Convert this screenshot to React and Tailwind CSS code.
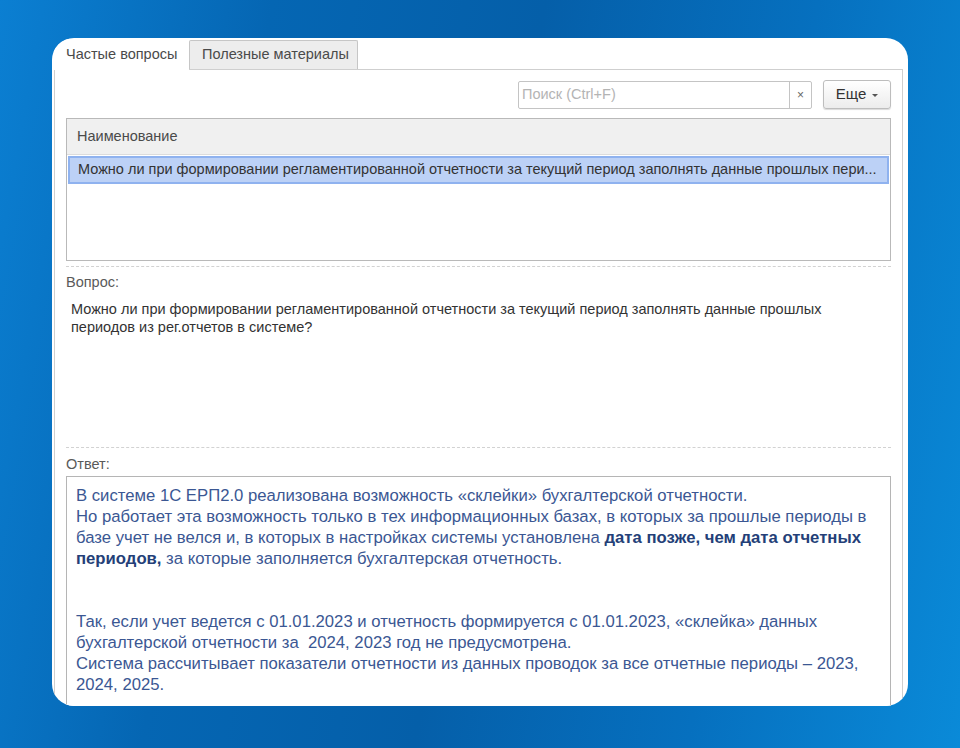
import React from "react";

const font = { fontFamily: '"Liberation Sans", Arial, sans-serif' };

const Tabs = () => (
  <div className="flex h-[31px] items-end border-b border-[#cfcfcf]">
    <div className="-mb-px flex h-[31px] w-[135px] items-center bg-white pl-[12px] text-[14.5px] text-[#4a4a4a]">
      Частые вопросы
    </div>
    <div className="flex h-[29px] w-[169px] items-center rounded-t-[2px] border border-b-0 border-[#c6c6c6] bg-[#ededed] pl-[12px] text-[14.5px] text-[#4a4a4a]">
      Полезные материалы
    </div>
  </div>
);

const Toolbar = () => (
  <div className="flex h-[29px] items-center justify-end gap-[11px]">
    <div className="flex h-[28px] w-[294px] rounded-[2px] border border-[#c4c4c4] bg-white">
      <div className="flex flex-1 items-center pl-[3px] text-[14.5px] text-[#b4b4b4]">Поиск (Ctrl+F)</div>
      <div className="flex w-[22px] items-center justify-center border-l border-[#c4c4c4] text-[12px] text-[#666]">
        ×
      </div>
    </div>
    <button className="flex h-[29px] w-[68px] items-center justify-center gap-[6px] rounded-[3px] border border-[#bdbdbd] bg-gradient-to-b from-white to-[#ececec] text-[15px] text-[#333] shadow-[0_1px_1px_rgba(0,0,0,0.15)]">
      Еще
      <span className="mt-[2px] border-x-[3px] border-t-[3px] border-x-transparent border-t-[#555]" />
    </button>
  </div>
);

const Table = () => (
  <div className="mt-[9px] h-[143px] border border-[#b9b9b9] bg-white">
    <div className="flex h-[36px] items-center border-b border-[#dcdcdc] bg-[#f0f0f0] pl-[10px] text-[14.5px] text-[#4a4a4a]">
      Наименование
    </div>
    <div className="mx-px mt-px flex h-[28px] items-center border-2 border-[#8fb2ef] bg-[#bcd1f6] pl-[8px] pr-[6px] text-[14.5px] text-[#333]">
      Можно ли при формировании регламентированной отчетности за текущий период заполнять данные прошлых пери...
    </div>
  </div>
);

const Dashed = () => <div className="border-t border-dashed border-[#d2d2d2]" />;

export default function App() {
  return (
    <div
      className="relative h-[748px] w-full overflow-hidden bg-[linear-gradient(100deg,#0b7fd2_0%,#0566b3_25%,#055fa9_50%,#0670bf_75%,#0a8ad8_100%)]"
      style={font}
    >
      <div className="ml-[52px] mt-[38px] h-[668px] w-[856px] overflow-hidden rounded-[22px] bg-white pl-[2px] pr-[5px] pt-[1px]">
        <Tabs />
        <div className="h-[640px] border-x border-[#cfcfcf] px-[11px] pt-[10px]">
          <Toolbar />
          <Table />
          <div className="mt-[5px]">
            <Dashed />
          </div>
          <div className="mt-[7px] text-[14.5px] leading-[16px] text-[#5a5a5a]">Вопрос:</div>
          <div className="mt-[10px] h-[147px] pl-[5px] text-[14.5px] leading-[18px] text-[#333]">
            Можно ли при формировании регламентированной отчетности за текущий период заполнять данные прошлых
            <br />
            периодов из рег.отчетов в системе?
          </div>
          <Dashed />
          <div className="mt-[8px] text-[14.5px] leading-[16px] text-[#5a5a5a]">Ответ:</div>
          <div className="mt-[4px] h-[260px] border border-[#b5b5b5] bg-white px-[9px] pt-[8px] text-[16.7px] leading-[21px] text-[#3b5793]">
            В системе 1С ЕРП2.0 реализована возможность «склейки» бухгалтерской отчетности.
            <br />
            Но работает эта возможность только в тех информационных базах, в которых за прошлые периоды в
            <br />
            базе учет не велся и, в которых в настройках системы установлена{" "}
            <b className="text-[#243f78]">дата позже, чем дата отчетных</b>
            <br />
            <b className="text-[#243f78]">периодов,</b> за которые заполняется бухгалтерская отчетность.
            <br />
            <br />
            <br />
            Так, если учет ведется с 01.01.2023 и отчетность формируется с 01.01.2023, «склейка» данных
            <br />
            бухгалтерской отчетности за&nbsp; 2024, 2023 год не предусмотрена.
            <br />
            Система рассчитывает показатели отчетности из данных проводок за все отчетные периоды – 2023,
            <br />
            2024, 2025.
          </div>
        </div>
      </div>
    </div>
  );
}
